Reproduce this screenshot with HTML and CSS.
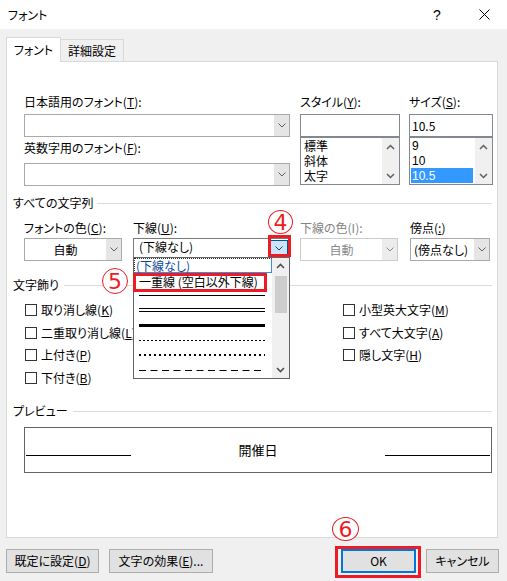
FILE: index.html
```html
<!DOCTYPE html>
<html lang="ja">
<head>
<meta charset="utf-8">
<title>フォント</title>
<link rel="stylesheet" href="styles.css">
</head>
<body>
<div class="titlebar">
  <span class="title">フォント</span>
  <span class="help">?</span>
  <span class="close"><svg width="11" height="11" viewBox="0 0 11 11"><path d="M0.5 0.5 L10.5 10.5 M10.5 0.5 L0.5 10.5" stroke="#000" stroke-width="1" fill="none"/></svg></span>
</div>
<div class="tabs">
  <div class="tab active">フォント</div>
  <div class="tab">詳細設定</div>
</div>
<div class="panel">
  <div class="font-row">
    <div class="col-font">
      <div class="label">日本語用のフォント(<u>T</u>):</div>
      <div class="combo first"><span class="val"></span><span class="drop"><svg width="8" height="5" viewBox="0 0 8 5"><path d="M0.5 0.5 L4 4 L7.5 0.5" fill="none" stroke="#606060"/></svg></span></div>
      <div class="label second">英数字用のフォント(<u>F</u>):</div>
      <div class="combo second"><span class="val"></span><span class="drop"><svg width="8" height="5" viewBox="0 0 8 5"><path d="M0.5 0.5 L4 4 L7.5 0.5" fill="none" stroke="#606060"/></svg></span></div>
    </div>
    <div class="col-style">
      <div class="label">スタイル(<u>Y</u>):</div>
      <div class="textbox"></div>
      <div class="listbox">
        <div class="items">
          <div class="item cjk">標準</div>
          <div class="item cjk">斜体</div>
          <div class="item cjk">太字</div>
        </div>
        <div class="vscroll">
          <span class="arrow"><svg width="9" height="6" viewBox="0 0 9 6"><path d="M1 5 L4.5 1.5 L8 5" fill="none" stroke="#606060" stroke-width="1.5"/></svg></span>
          <span class="arrow"><svg width="9" height="6" viewBox="0 0 9 6"><path d="M1 1 L4.5 4.5 L8 1" fill="none" stroke="#606060" stroke-width="1.5"/></svg></span>
        </div>
      </div>
    </div>
    <div class="col-size">
      <div class="label">サイズ(<u>S</u>):</div>
      <div class="textbox size">10.5</div>
      <div class="listbox">
        <div class="items">
          <div class="item num">9</div>
          <div class="item num">10</div>
          <div class="item num selected">10.5</div>
        </div>
        <div class="vscroll">
          <span class="arrow"><svg width="9" height="6" viewBox="0 0 9 6"><path d="M1 5 L4.5 1.5 L8 5" fill="none" stroke="#606060" stroke-width="1.5"/></svg></span>
          <span class="arrow"><svg width="9" height="6" viewBox="0 0 9 6"><path d="M1 1 L4.5 4.5 L8 1" fill="none" stroke="#606060" stroke-width="1.5"/></svg></span>
        </div>
      </div>
    </div>
  </div>

  <div class="group-head first"><span>すべての文字列</span><span class="rule"></span></div>
  <div class="attr-row">
    <div class="attr a-color">
      <div class="label">フォントの色(<u>C</u>):</div>
      <div class="combo"><span class="val center">自動</span><span class="drop"><svg width="8" height="5" viewBox="0 0 8 5"><path d="M0.5 0.5 L4 4 L7.5 0.5" fill="none" stroke="#606060"/></svg></span></div>
    </div>
    <div class="attr a-uline">
      <div class="label">下線(<u>U</u>):</div>
      <div class="combo uline"><span class="val">(下線なし)</span><span class="drop"><svg width="8" height="5" viewBox="0 0 8 5"><path d="M0.5 0.5 L4 4 L7.5 0.5" fill="none" stroke="#1a3f6b"/></svg></span></div>
      <div class="dropdown">
        <div class="ditems">
          <div class="ditem hover">(下線なし)</div>
          <div class="ditem text">一重線 (空白以外下線)</div>
          <div class="ditem line"><svg width="126" height="5" viewBox="0 0 126 5"><line x1="0" y1="2.5" x2="126" y2="2.5" stroke="#000" stroke-width="1"/></svg></div>
          <div class="ditem line"><svg width="126" height="5" viewBox="0 0 126 5"><line x1="0" y1="0.5" x2="126" y2="0.5" stroke="#000" stroke-width="1"/><line x1="0" y1="3.5" x2="126" y2="3.5" stroke="#000" stroke-width="1"/></svg></div>
          <div class="ditem line"><svg width="126" height="5" viewBox="0 0 126 5"><line x1="0" y1="2.5" x2="126" y2="2.5" stroke="#000" stroke-width="3"/></svg></div>
          <div class="ditem line"><svg width="126" height="5" viewBox="0 0 126 5"><line x1="0" y1="2.5" x2="126" y2="2.5" stroke="#000" stroke-width="1" stroke-dasharray="2 2"/></svg></div>
          <div class="ditem line"><svg width="126" height="5" viewBox="0 0 126 5"><line x1="0" y1="2" x2="126" y2="2" stroke="#000" stroke-width="2" stroke-dasharray="2 3"/></svg></div>
          <div class="ditem line"><svg width="126" height="5" viewBox="0 0 126 5"><line x1="0" y1="2.5" x2="126" y2="2.5" stroke="#000" stroke-width="1" stroke-dasharray="7 4.5"/></svg></div>
        </div>
        <div class="dscroll">
          <span class="arrow"><svg width="9" height="6" viewBox="0 0 9 6"><path d="M1 5 L4.5 1.5 L8 5" fill="none" stroke="#505050" stroke-width="1.6"/></svg></span>
          <span class="thumb"></span>
          <span class="spacer"></span>
          <span class="arrow"><svg width="9" height="6" viewBox="0 0 9 6"><path d="M1 1 L4.5 4.5 L8 1" fill="none" stroke="#505050" stroke-width="1.6"/></svg></span>
        </div>
        <div class="mark-box item-mark"></div>
      </div>
      <div class="mark-box drop-mark"></div>
      <div class="num-mark n4">4</div>
      <div class="num-mark n5">5</div>
    </div>
    <div class="attr a-ucolor disabled">
      <div class="label">下線の色(I):</div>
      <div class="combo"><span class="val center">自動</span><span class="drop"><svg width="8" height="5" viewBox="0 0 8 5"><path d="M0.5 0.5 L4 4 L7.5 0.5" fill="none" stroke="#8a8a8a"/></svg></span></div>
    </div>
    <div class="attr a-emph">
      <div class="label">傍点(<u>:</u>)</div>
      <div class="combo"><span class="val">(傍点なし)</span><span class="drop"><svg width="8" height="5" viewBox="0 0 8 5"><path d="M0.5 0.5 L4 4 L7.5 0.5" fill="none" stroke="#606060"/></svg></span></div>
    </div>
  </div>

  <div class="group-head second"><span>文字飾り</span><span class="rule"></span></div>
  <div class="effects">
    <div class="eff-col left">
      <div class="check"><span class="box"></span>取り消し線(<u>K</u>)</div>
      <div class="check"><span class="box"></span>二重取り消し線(<u>L</u>)</div>
      <div class="check"><span class="box"></span>上付き(<u>P</u>)</div>
      <div class="check"><span class="box"></span>下付き(<u>B</u>)</div>
    </div>
    <div class="eff-col right">
      <div class="check"><span class="box"></span>小型英大文字(<u>M</u>)</div>
      <div class="check"><span class="box"></span>すべて大文字(<u>A</u>)</div>
      <div class="check"><span class="box"></span>隠し文字(<u>H</u>)</div>
    </div>
  </div>

  <div class="group-head third"><span>プレビュー</span><span class="rule"></span></div>
  <div class="preview">
    <span class="pline"></span>
    <span class="ptext">開催日</span>
    <span class="pline"></span>
  </div>
</div>
<div class="buttons">
  <div class="btn b-default">既定に設定(<u>D</u>)</div>
  <div class="btn b-effect">文字の効果(<u>E</u>)...</div>
  <div class="ok-wrap">
    <div class="btn ok">OK</div>
    <div class="num-mark n6">6</div>
  </div>
  <div class="btn b-cancel">キャンセル</div>
</div>
</body>
</html>
```
FILE: styles.css
```css
* { box-sizing: border-box; }
html, body { margin: 0; padding: 0; }
body {
  width: 507px;
  height: 581px;
  overflow: hidden;
  background: #f0f0f0;
  font-family: "Noto Sans CJK JP", "Noto Sans", sans-serif;
  font-size: 12px;
  color: #000;
  font-feature-settings: "palt";
}
u { text-decoration: underline; text-underline-offset: 1px; }

/* title bar */
.titlebar {
  height: 29px;
  background: #fff;
  display: flex;
  align-items: center;
  padding-left: 8px;
}
.title { flex: 1; line-height: 16px; }
.help {
  width: 10px;
  text-align: center;
  margin-right: 37px;
  line-height: 16px;
  font-size: 14px;
  font-family: "Liberation Sans", sans-serif;
}
.close { width: 11px; height: 11px; display: flex; margin-right: 17px; }

/* tabs */
.tabs {
  display: flex;
  align-items: flex-end;
  height: 24px;
  margin: 8px 0 0 6px;
  position: relative;
  z-index: 1;
}
.tab {
  width: 63px;
  height: 22px;
  border: 1px solid #d9d9d9;
  border-bottom: none;
  border-left: none;
  background: #f0f0f0;
  display: flex;
  align-items: center;
  justify-content: center;
  line-height: 16px;
}
.tab.active {
  width: 55px;
  height: 25px;
  margin-bottom: -1px;
  background: #fff;
  border-left: 1px solid #d9d9d9;
}

/* panel */
.panel {
  margin-left: 6px;
  width: 492px;
  height: 477px;
  background: #fff;
  border: 1px solid #d9d9d9;
  padding: 32px 5px 0 6px;
}
.label { height: 16px; line-height: 16px; white-space: nowrap; }
.label.second { margin-top: 3px; }

.font-row { display: flex; padding-left: 11px; }
.col-font { width: 266px; margin-right: 10px; flex-shrink: 0; }
.col-style { width: 100px; margin-right: 9px; flex-shrink: 0; }
.col-size { width: 84px; flex-shrink: 0; }

.combo {
  height: 23px;
  border: 1px solid #a9a9a9;
  background: #fff;
  display: flex;
  margin-top: 4px;
}
.combo.second { margin-top: 7px; }
.combo .val {
  flex: 1;
  display: flex;
  align-items: center;
  padding-left: 4px;
  white-space: nowrap;
  line-height: 16px;
}
.combo .val.center { justify-content: center; padding-left: 0; }
.combo .drop {
  width: 15px;
  background: #e5e5e5;
  display: flex;
  align-items: center;
  justify-content: center;
}

.textbox {
  height: 23px;
  border: 1px solid #828790;
  margin-top: 4px;
  padding-left: 2px;
  display: flex;
  align-items: center;
  line-height: 16px;
}
.listbox {
  height: 48px;
  border: 1px solid #828790;
  display: flex;
}
.listbox .items { flex: 1; }
.listbox .item {
  height: 15px;
  line-height: 15px;
  padding-left: 3px;
  font-family: "Liberation Sans", "Noto Sans CJK JP", sans-serif;
}
.listbox .item.cjk { padding-top: 2px; }
.listbox .item.num { padding-left: 2px; margin-right: 2px; padding-top: 1px; }
.listbox .item.selected { background: #3399ff; color: #fff; margin-left: 1px; padding-left: 1px; }
.vscroll {
  width: 17px;
  background: #f0f0f0;
  display: flex;
  flex-direction: column;
  justify-content: space-between;
}
.arrow {
  height: 17px;
  display: flex;
  align-items: center;
  justify-content: center;
}

/* group headers */
.group-head {
  display: flex;
  align-items: center;
  height: 16px;
  line-height: 16px;
  white-space: nowrap;
}
.group-head .rule { flex: 1; height: 1px; background: #dcdcdc; margin-left: 5px; }
.group-head.first { margin-top: 9px; }
.group-head.first .rule { margin-left: 4px; }
.group-head.second { margin-top: 16px; }
.group-head.third { margin-top: 14px; }

/* attribute row */
.attr-row { display: flex; margin-top: 9px; padding-left: 11px; }
.attr { display: flex; flex-direction: column; flex-shrink: 0; position: relative; }
.attr .combo { margin-top: 2px; }
.a-color { width: 98px; margin-right: 11px; }
.a-uline { width: 157px; margin-right: 10px; }
.a-ucolor { width: 98px; margin-right: 12px; }
.a-emph { width: 80px; }
.a-uline .combo .val { padding-left: 5px; }
.a-emph .combo .val { padding-left: 3px; }
.combo.uline { border-color: #7a7a7a; align-items: flex-start; }
.combo.uline .drop {
  width: 18px;
  height: 16px;
  margin: 1px;
  background: #cce4f7;
  border: 1px solid #005499;
}
.disabled .label { color: #838383; }
.disabled .combo { border-color: #cccccc; }
.disabled .combo .val { color: #8a8a8a; }
.disabled .combo .drop { background: #ececec; }

/* open dropdown list */
.dropdown {
  position: absolute;
  left: 0;
  top: 37px;
  width: 157px;
  height: 122px;
  border: 1px solid #646464;
  background: #fff;
  display: flex;
  z-index: 2;
}
.ditems { flex: 1; }
.ditem {
  height: 15px;
  display: flex;
  align-items: center;
  padding-left: 5px;
  white-space: nowrap;
  line-height: 15px;
}
.ditem.hover {
  padding-left: 1px;
  color: #0a4a9e;
  border: 1px dotted #333;
  border-right: 1px solid #3c8ce0;
  border-bottom: 1px solid #3c8ce0;
}
.ditem.text { padding-left: 5px; padding-top: 2px; }
.ditem.line svg { display: block; }
.dscroll {
  width: 17px;
  background: #f0f0f0;
  display: flex;
  flex-direction: column;
  align-items: center;
}
.dscroll .arrow { height: 16px; width: 17px; }
.dscroll .thumb { width: 12px; height: 37px; background: #cdcdcd; margin-top: 2px; }
.dscroll .spacer { flex: 1; }

/* annotation marks */
.mark-box { position: absolute; border: 3px solid #ed1c24; z-index: 3; }
.item-mark { left: -1px; top: 15px; width: 134px; height: 19px; }
.drop-mark { left: 135px; top: 15px; width: 23px; height: 22px; }
.num-mark {
  position: absolute;
  width: 25px;
  height: 24px;
  border: 1.5px solid #ed1c24;
  border-radius: 50%;
  background: #fff;
  color: #ed1c24;
  font-size: 22px;
  line-height: 1;
  display: flex;
  align-items: center;
  justify-content: center;
  font-family: "DejaVu Sans", "Noto Sans", sans-serif;
  padding-top: 1px;
  z-index: 3;
}
.n4 { left: 135px; top: -10px; }
.n5 { left: -31px; top: 48px; width: 26px; height: 26px; }
.n6 { left: -6px; top: -32px; width: 27px; height: 24px; }

/* effects */
.effects { display: flex; margin-top: 6px; padding-left: 12px; }
.eff-col.left { width: 318px; }
.check {
  height: 22.5px;
  display: flex;
  align-items: center;
  white-space: nowrap;
  line-height: 16px;
}
.box {
  width: 12px;
  height: 12px;
  border: 1px solid #333;
  background: #fff;
  margin-right: 4px;
  flex-shrink: 0;
}

/* preview */
.preview {
  margin: 8px 0 0 11px;
  width: 468px;
  height: 46px;
  border: 1px solid #646464;
  display: flex;
  align-items: center;
  justify-content: space-between;
  padding: 0 1px;
}
.pline { width: 105px; height: 1px; background: #000; margin-top: 10px; }
.ptext { font-size: 13px; line-height: 16px; }

/* buttons */
.buttons {
  display: flex;
  align-items: flex-start;
  margin-top: 11px;
  padding: 0 8px 0 6px;
}
.btn {
  height: 24px;
  border: 1px solid #adadad;
  background: #e1e1e1;
  display: flex;
  align-items: center;
  justify-content: center;
  line-height: 16px;
  white-space: nowrap;
}
.b-default { width: 93px; margin-right: 10px; }
.b-effect { width: 104px; }
.ok-wrap {
  margin-left: auto;
  margin-top: -3px;
  margin-right: 5px;
  border: 3px solid #ed1c24;
  padding: 0 2px 2px 3px;
  position: relative;
}
.btn.ok { width: 75px; border: 2px solid #0078d7; }
.b-cancel { width: 73px; }
```
